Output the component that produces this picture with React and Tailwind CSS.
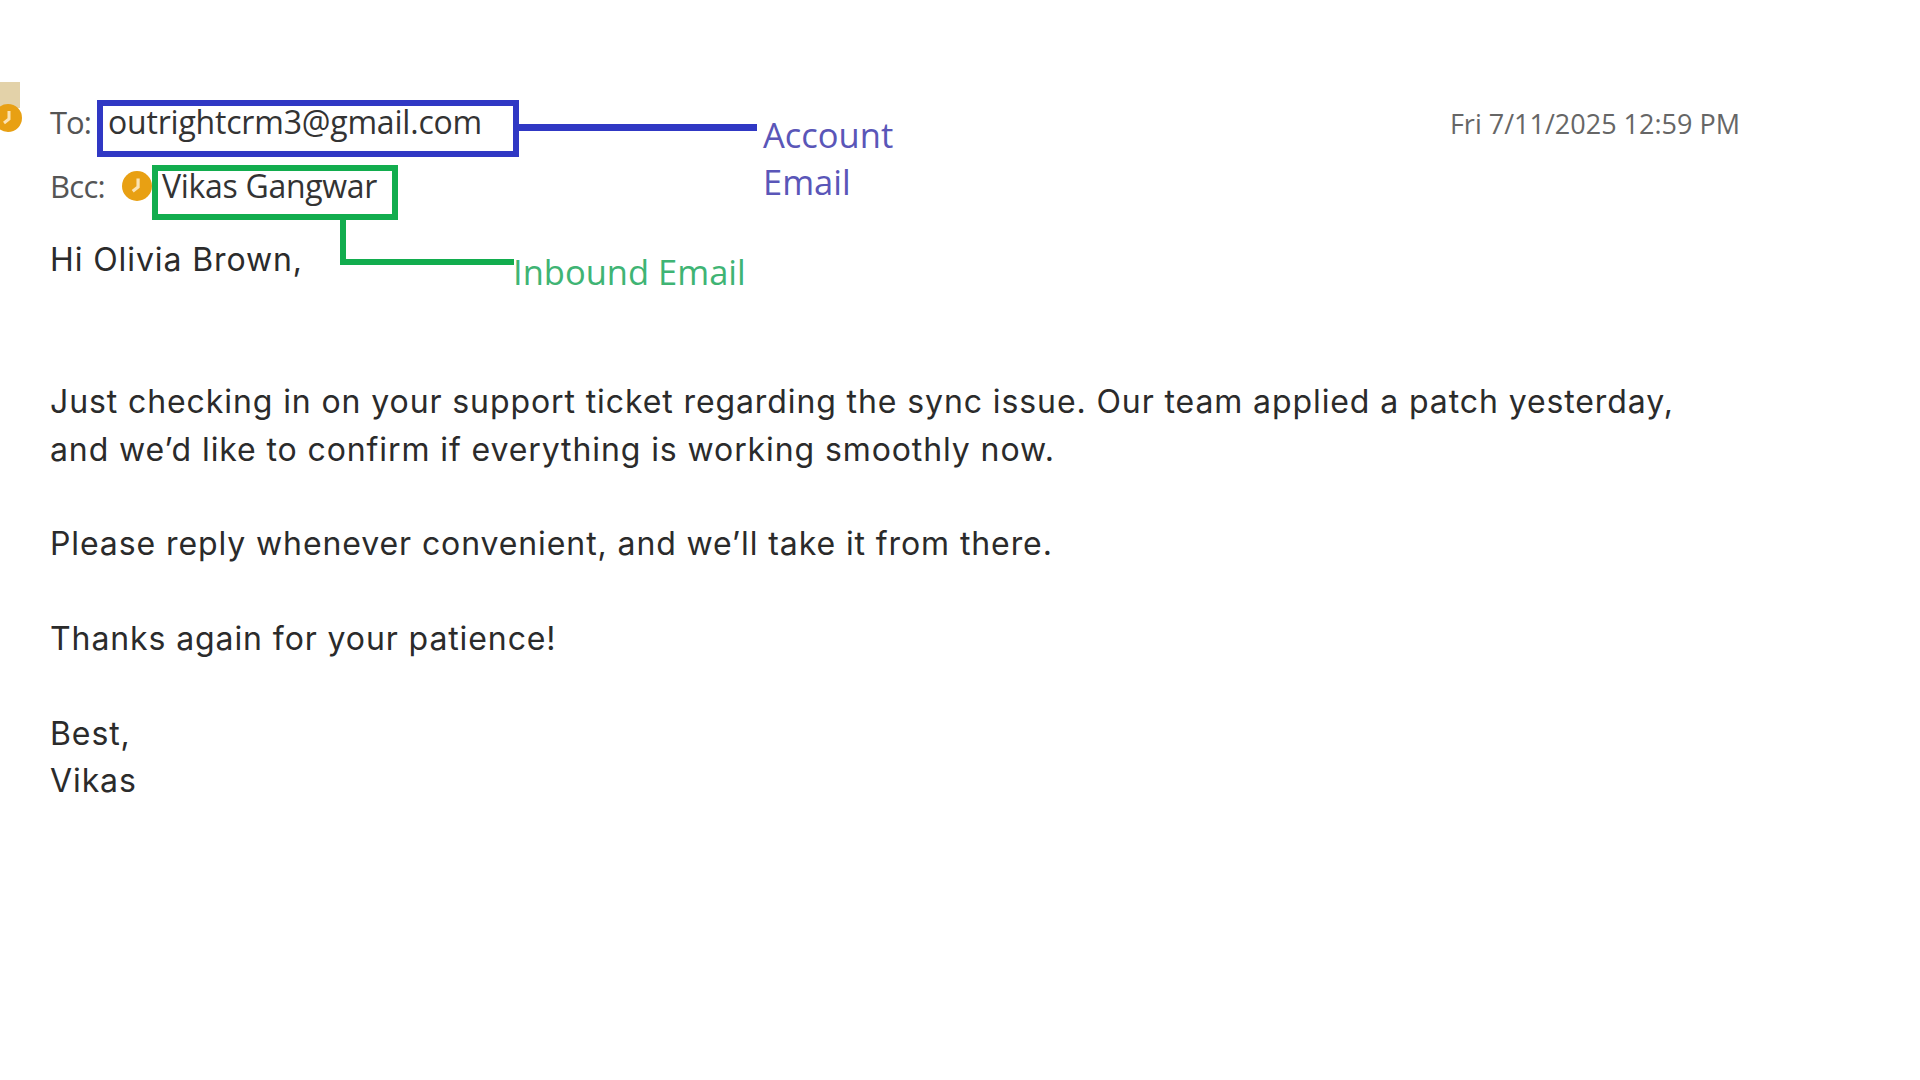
const headerFont = "font-['Open_Sans',sans-serif]";

function ClockBadge({ className }) {
  return (
    <svg className={className} viewBox="0 0 28 28">
      <circle cx="14" cy="14" r="14" fill="#e8a013" />
      <path d="M15 7v8l-5 4" fill="none" stroke="#fbe3b4" strokeWidth="3" />
    </svg>
  );
}

function ToRow() {
  return (
    <div className={`flex items-center h-[57px] w-[1690px] ${headerFont}`}>
      <span className="w-[47px] pb-[12px] text-[31px] leading-none text-[#555] tracking-[-1px]">To:</span>
      <div className="flex items-center w-[422px] h-[57px] border-[6px] border-[#3038c4] pl-[5px] pb-[14px] text-[32px] leading-none text-[#333] tracking-[-0.2px]">
        outrightcrm3@gmail.com
      </div>
      <div className="self-start mt-[24px] w-[238px] h-[7px] bg-[#3038c4]" />
      <div className="self-start mt-[11px] ml-[6px] text-[34.5px] leading-[47px] text-[#5a56b8]">
        <div>Account</div>
        <div>Email</div>
      </div>
      <span className="ml-auto pb-[10px] text-[27px] leading-none text-[#666]">Fri 7/11/2025 12:59 PM</span>
    </div>
  );
}

function BccRow() {
  return (
    <div className={`flex items-center h-[55px] mt-[8px] ${headerFont}`}>
      <span className="w-[72px] pb-[13px] text-[31px] leading-none text-[#555] tracking-[-0.7px]">Bcc:</span>
      <ClockBadge className="w-[30px] h-[30px] mb-[13px]" />
      <div className="relative flex items-center w-[246px] h-[55px] border-[6px] border-[#12ad4e] pl-[4px] pb-[14px] text-[32px] leading-none text-[#333] tracking-[-0.3px]">
        Vikas Gangwar
        {/* connector and label hang off the box */}
        <div className="absolute left-[182px] top-[49px] w-[6px] h-[44px] bg-[#12ad4e]" />
        <div className="absolute left-[182px] top-[88px] w-[174px] h-[6px] bg-[#12ad4e]" />
        <div className="absolute left-[355px] top-[77px] whitespace-nowrap text-[34.5px] leading-[47px] tracking-normal text-[#3fb474]">
          Inbound Email
        </div>
      </div>
    </div>
  );
}

export default function App() {
  return (
    <div className="relative w-[1920px] h-[1080px] overflow-hidden bg-white pl-[50px] pt-[100px]">
      {/* avatar cut off at the page edge */}
      <div className="absolute left-0 top-[82px] w-[20px] h-[26px] bg-[#e3d2a9]" />
      <ClockBadge className="absolute left-[-6px] top-[104px] w-[28px] h-[28px]" />

      <ToRow />
      <BccRow />

      <div className="font-['Inter',sans-serif] text-[32px] leading-[47.4px] tracking-[0.9px] text-[#2b2b2b] mt-[16px]">
        <p>Hi Olivia Brown,</p>
        <p className="mt-[94.8px]">
          Just checking in on your support ticket regarding the sync issue. Our team applied a patch yesterday,
          <br />
          and we’d like to confirm if everything is working smoothly now.
        </p>
        <p className="mt-[47.4px]">Please reply whenever convenient, and we’ll take it from there.</p>
        <p className="mt-[47.4px]">Thanks again for your patience!</p>
        <p className="mt-[47.4px]">
          Best,
          <br />
          Vikas
        </p>
      </div>
    </div>
  );
}
